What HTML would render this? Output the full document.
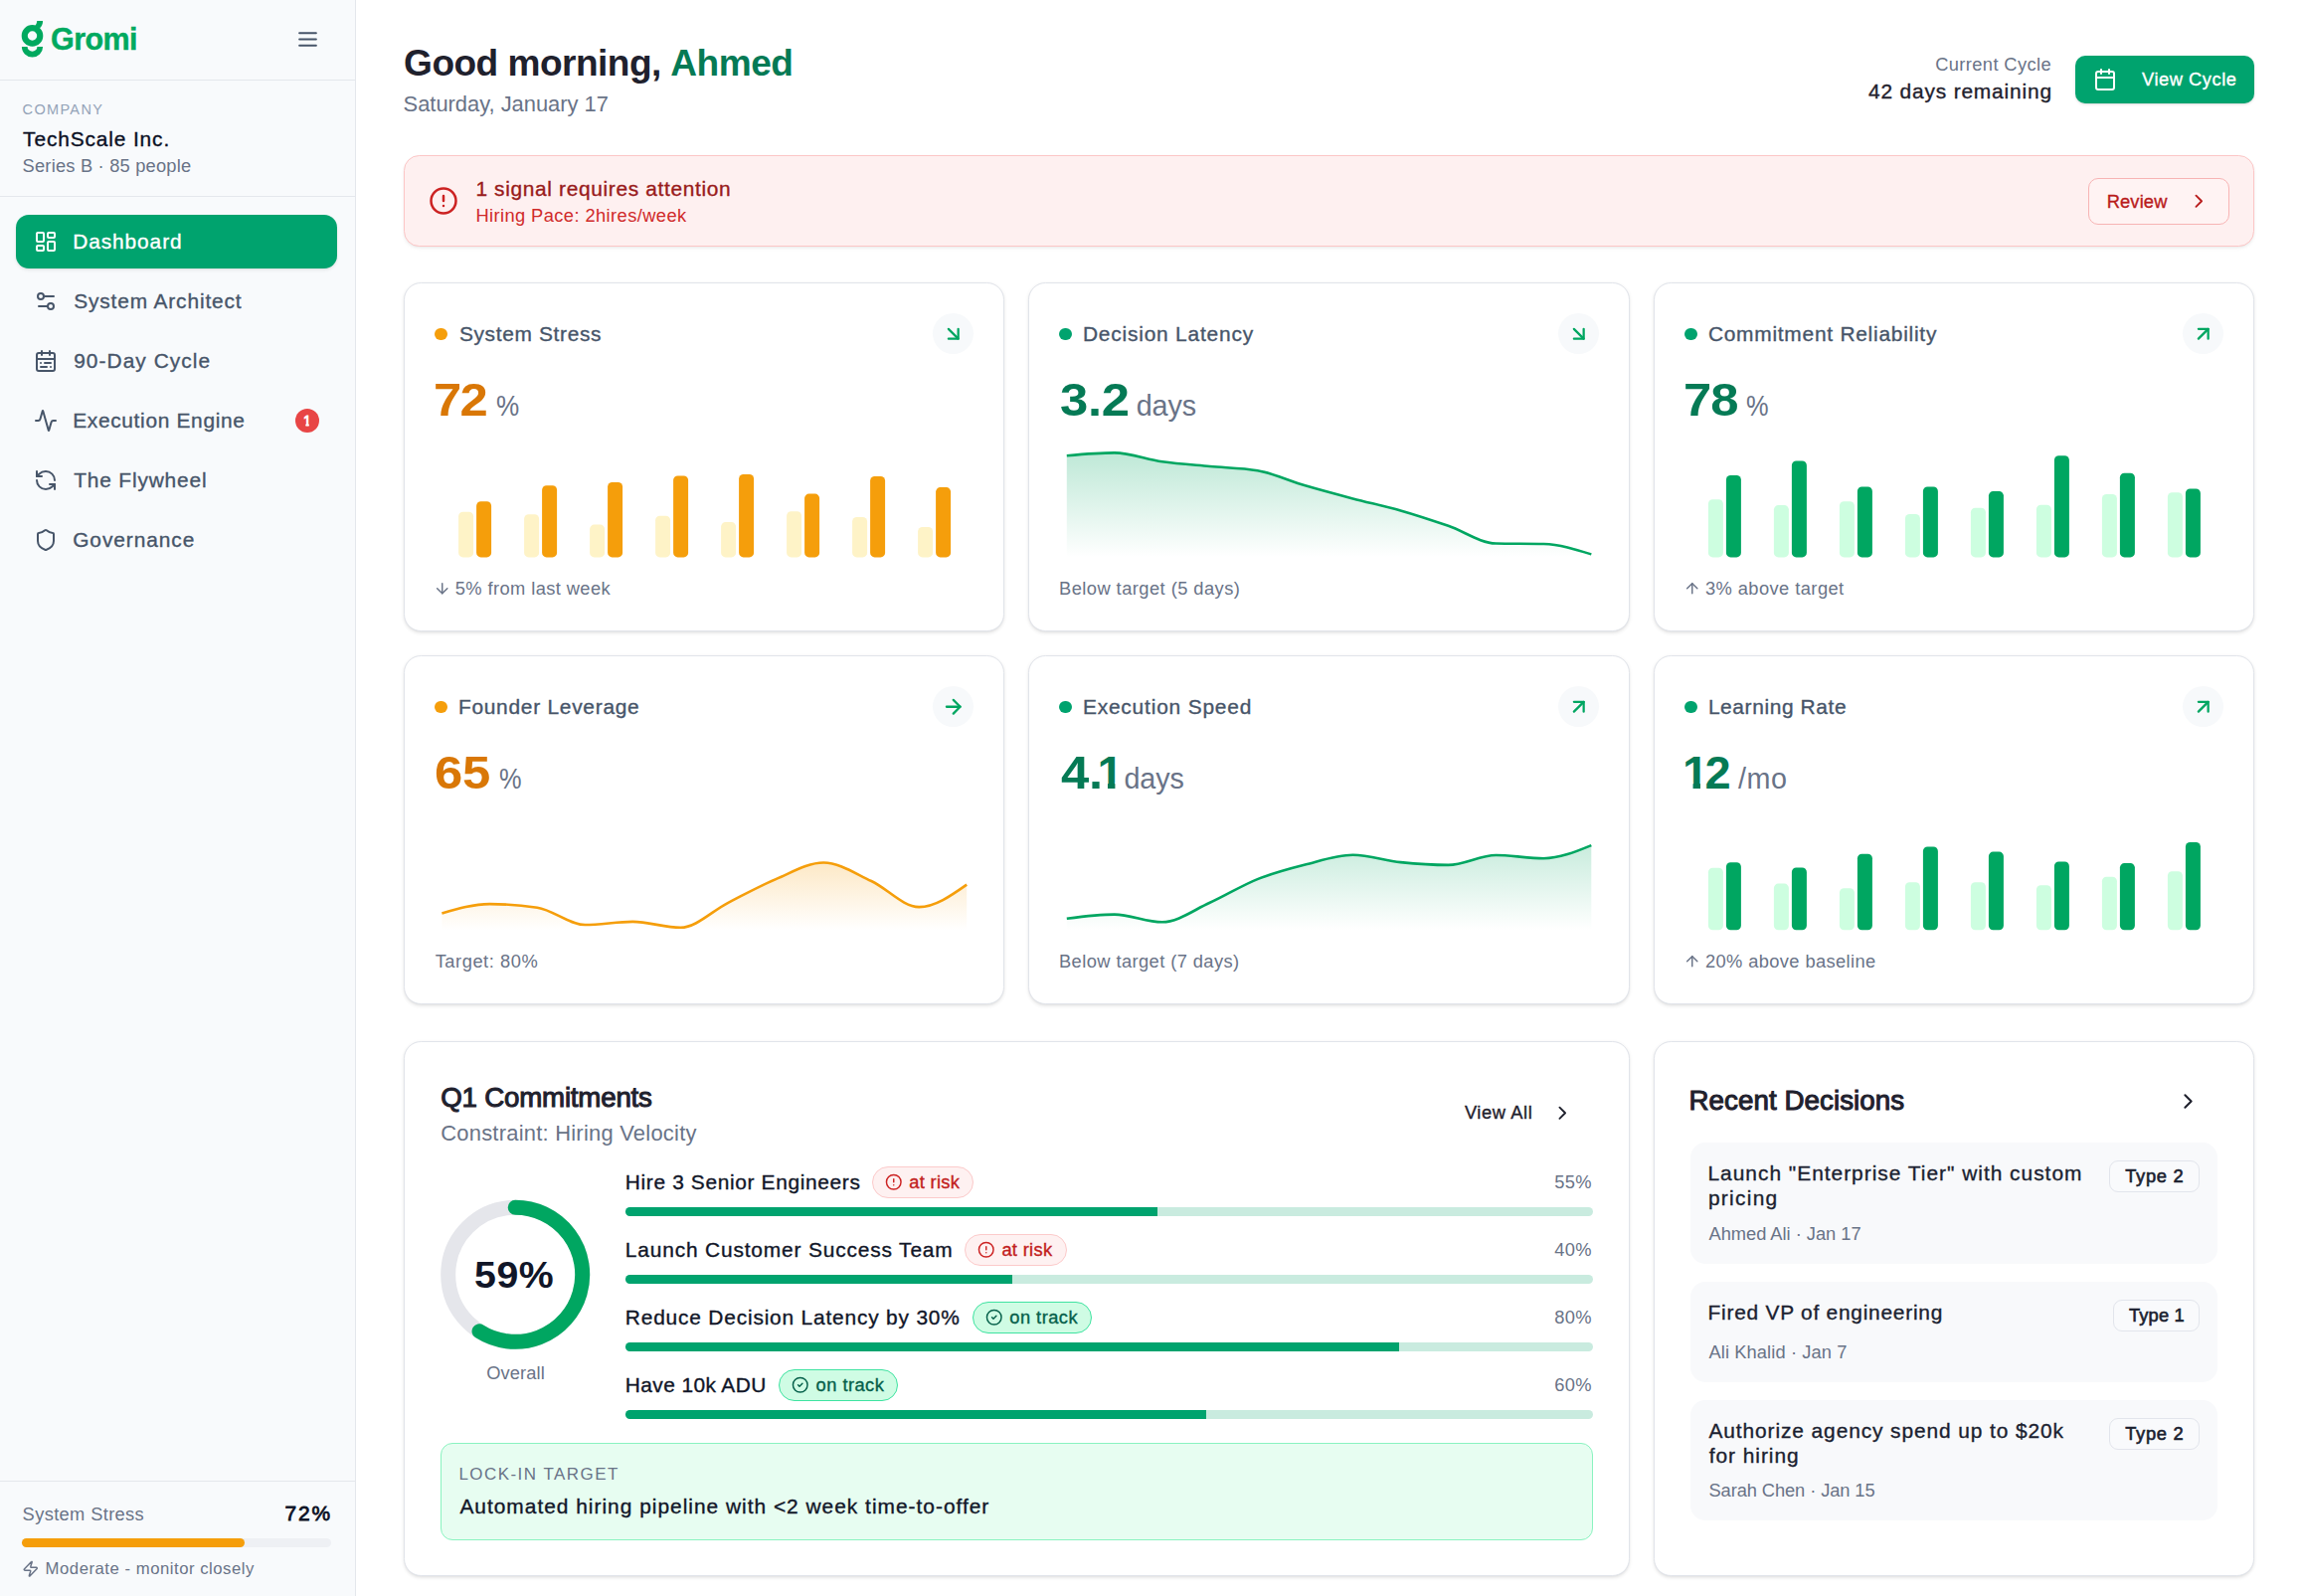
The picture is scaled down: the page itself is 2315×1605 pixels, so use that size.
<!DOCTYPE html>
<html lang="en"><head><meta charset="utf-8"><title>Gromi Dashboard</title>
<style>
html,body{margin:0;padding:0}
body{width:2315px;height:1605px;position:relative;overflow:hidden;background:#fff;font-family:"Liberation Sans",sans-serif}
</style></head><body>
<div style="position:absolute;left:0px;top:0px;width:357px;height:1605px;background:#f8fafc"></div>
<div style="position:absolute;left:357px;top:0px;width:1px;height:1605px;background:#e4e7ec"></div>
<div style="position:absolute;left:0px;top:80px;width:357px;height:1px;background:#e4e7ec"></div>
<div style="position:absolute;left:0px;top:197px;width:357px;height:1px;background:#e4e7ec"></div>
<div style="position:absolute;left:0px;top:1489px;width:357px;height:1px;background:#e4e7ec"></div>
<svg style="position:absolute;left:18px;top:16px" width="32" height="46" viewBox="18 16 32 46">
<g fill="#00a95f"><path d="M32.5 25.1a10.8 10.8 0 1 0 0 21.6a10.8 10.8 0 1 0 0-21.6zm0 6.2a4.7 4.7 0 1 1 0 9.4a4.7 4.7 0 1 1 0-9.4z" fill-rule="evenodd"/>
<path d="M37.2 20.9h5.9c0 3.2-1.2 5.6-3.2 7.4l-4.6-2.6c1.2-1.4 1.9-2.9 1.9-4.8z"/>
<path d="M21.9 46.9h5.7a4.9 4.9 0 0 0 9.8 0h5.7a10.6 10.6 0 0 1-21.2 0z"/></g></svg>
<svg style="position:absolute;left:296.50px;top:26.90px" width="25" height="25" viewBox="0 0 24 24" fill="none" stroke="#475569" stroke-width="2" stroke-linecap="round" stroke-linejoin="round"><line x1="4" x2="20" y1="12" y2="12"/><line x1="4" x2="20" y1="6" y2="6"/><line x1="4" x2="20" y1="18" y2="18"/></svg>
<div style="position:absolute;left:16px;top:216px;width:323px;height:54px;background:#00a36e;border-radius:13px;box-shadow:0 2px 4px -1px rgba(0,0,0,.10),0 1px 3px -1px rgba(0,0,0,.08)"></div>
<svg style="position:absolute;left:34.00px;top:231.00px" width="24" height="24" viewBox="0 0 24 24" fill="none" stroke="#fff" stroke-width="2" stroke-linecap="round" stroke-linejoin="round"><rect width="7" height="9" x="3" y="3" rx="1"/><rect width="7" height="5" x="14" y="3" rx="1"/><rect width="7" height="9" x="14" y="12" rx="1"/><rect width="7" height="5" x="3" y="16" rx="1"/></svg>
<svg style="position:absolute;left:34.00px;top:291.00px" width="24" height="24" viewBox="0 0 24 24" fill="none" stroke="#475569" stroke-width="2" stroke-linecap="round" stroke-linejoin="round"><path d="M20 7h-9"/><path d="M14 17H5"/><circle cx="17" cy="17" r="3"/><circle cx="7" cy="7" r="3"/></svg>
<svg style="position:absolute;left:34.00px;top:351.00px" width="24" height="24" viewBox="0 0 24 24" fill="none" stroke="#475569" stroke-width="2" stroke-linecap="round" stroke-linejoin="round"><rect width="18" height="18" x="3" y="4" rx="2"/><path d="M16 2v4"/><path d="M3 10h18"/><path d="M8 2v4"/><path d="M17 14h-6"/><path d="M13 18H7"/><path d="M7 14h.01"/><path d="M17 18h.01"/></svg>
<svg style="position:absolute;left:34.00px;top:411.00px" width="24" height="24" viewBox="0 0 24 24" fill="none" stroke="#475569" stroke-width="2" stroke-linecap="round" stroke-linejoin="round"><path d="M22 12h-2.48a2 2 0 0 0-1.93 1.46l-2.35 8.36a.25.25 0 0 1-.48 0L9.24 2.18a.25.25 0 0 0-.48 0l-2.35 8.36A2 2 0 0 1 4.49 12H2"/></svg>
<svg style="position:absolute;left:34.00px;top:471.00px" width="24" height="24" viewBox="0 0 24 24" fill="none" stroke="#475569" stroke-width="2" stroke-linecap="round" stroke-linejoin="round"><path d="M21 12a9 9 0 0 0-9-9 9.75 9.75 0 0 0-6.74 2.74L3 8"/><path d="M3 3v5h5"/><path d="M3 12a9 9 0 0 0 9 9 9.75 9.75 0 0 0 6.74-2.74L21 16"/><path d="M16 16h5v5"/></svg>
<svg style="position:absolute;left:34.00px;top:531.00px" width="24" height="24" viewBox="0 0 24 24" fill="none" stroke="#475569" stroke-width="2" stroke-linecap="round" stroke-linejoin="round"><path d="M20 13c0 5-3.5 7.5-7.66 8.95a1 1 0 0 1-.67-.01C7.5 20.5 4 18 4 13V6a1 1 0 0 1 1-1c2 0 4.5-1.2 6.24-2.72a1.17 1.17 0 0 1 1.52 0C14.51 3.81 17 5 19 5a1 1 0 0 1 1 1z"/></svg>
<div style="position:absolute;left:297px;top:411px;width:24px;height:24px;background:#e84545;border-radius:50%"></div>
<div style="position:absolute;left:22px;top:1547.2px;width:311px;height:8.8px;background:#eef0f4;border-radius:5px"></div>
<div style="position:absolute;left:22px;top:1547.2px;width:224px;height:8.8px;background:#f59e0b;border-radius:5px"></div>
<svg style="position:absolute;left:22.05px;top:1569.05px" width="17.5" height="17.5" viewBox="0 0 24 24" fill="none" stroke="#697387" stroke-width="2" stroke-linecap="round" stroke-linejoin="round"><path d="M4 14a1 1 0 0 1-.78-1.63l9.9-10.2a.5.5 0 0 1 .86.46l-1.92 6.02A1 1 0 0 0 13 10h7a1 1 0 0 1 .78 1.63l-9.9 10.2a.5.5 0 0 1-.86-.46l1.92-6.02A1 1 0 0 0 11 14z"/></svg>
<div style="position:absolute;left:2087px;top:56px;width:180px;height:47.5px;background:#00a36e;border-radius:10px;box-shadow:0 1px 3px rgba(0,0,0,.12),0 1px 2px -1px rgba(0,0,0,.12)"></div>
<svg style="position:absolute;left:2105.00px;top:68.00px" width="24" height="24" viewBox="0 0 24 24" fill="none" stroke="#fff" stroke-width="2" stroke-linecap="round" stroke-linejoin="round"><path d="M8 2v4"/><path d="M16 2v4"/><rect width="18" height="18" x="3" y="4" rx="2"/><path d="M3 10h18"/></svg>
<div style="position:absolute;left:406px;top:156px;width:1861px;height:91.5px;box-sizing:border-box;background:#fef0f0;border:1.25px solid #fcc6c6;border-radius:15.5px;box-shadow:0 2px 4px -1px rgba(0,0,0,.08),0 1px 3px -1px rgba(0,0,0,.06)"></div>
<svg style="position:absolute;left:431.10px;top:186.80px" width="30" height="30" viewBox="0 0 24 24" fill="none" stroke="#cc2222" stroke-width="2" stroke-linecap="round" stroke-linejoin="round"><circle cx="12" cy="12" r="10"/><line x1="12" x2="12" y1="8" y2="12"/><line x1="12" x2="12.01" y1="16" y2="16"/></svg>
<div style="position:absolute;left:2100px;top:178.5px;width:142px;height:47px;box-sizing:border-box;border:1.25px solid #f7b4b4;border-radius:10px;background:#fff3f3"></div>
<svg style="position:absolute;left:2199.75px;top:191.25px" width="22.5" height="22.5" viewBox="0 0 24 24" fill="none" stroke="#b91c1c" stroke-width="2" stroke-linecap="round" stroke-linejoin="round"><path d="m9 18 6-6-6-6"/></svg>
<div style="position:absolute;left:406px;top:284.4px;width:604px;height:350.6px;box-sizing:border-box;background:#fff;border:1.25px solid #e1e4ea;border-radius:17.5px;box-shadow:0 1.25px 3.75px 0 rgba(0,0,0,.085),0 1.25px 2.5px -1.25px rgba(0,0,0,.085)"></div>
<div style="position:absolute;left:437px;top:329.95px;width:12.5px;height:12.5px;background:#f59e0b;border-radius:50%"></div>
<div style="position:absolute;left:938px;top:315.2px;width:41px;height:41px;background:#f7f9fb;border-radius:50%"></div>
<svg style="position:absolute;left:946.75px;top:324.15px" width="23.5" height="23.5" viewBox="0 0 24 24" fill="none" stroke="#00a661" stroke-width="2.3" stroke-linecap="round" stroke-linejoin="round"><path d="m7 7 10 10"/><path d="M17 7v10H7"/></svg>
<svg style="position:absolute;left:435.85px;top:582.85px" width="17.5" height="17.5" viewBox="0 0 24 24" fill="none" stroke="#697387" stroke-width="2" stroke-linecap="round" stroke-linejoin="round"><path d="M12 5v14"/><path d="m19 12-7 7-7-7"/></svg>
<div style="position:absolute;left:1034px;top:284.4px;width:605px;height:350.6px;box-sizing:border-box;background:#fff;border:1.25px solid #e1e4ea;border-radius:17.5px;box-shadow:0 1.25px 3.75px 0 rgba(0,0,0,.085),0 1.25px 2.5px -1.25px rgba(0,0,0,.085)"></div>
<div style="position:absolute;left:1065px;top:329.95px;width:12.5px;height:12.5px;background:#00a36e;border-radius:50%"></div>
<div style="position:absolute;left:1567px;top:315.2px;width:41px;height:41px;background:#f7f9fb;border-radius:50%"></div>
<svg style="position:absolute;left:1575.75px;top:324.15px" width="23.5" height="23.5" viewBox="0 0 24 24" fill="none" stroke="#00a661" stroke-width="2.3" stroke-linecap="round" stroke-linejoin="round"><path d="m7 7 10 10"/><path d="M17 7v10H7"/></svg>
<div style="position:absolute;left:1663px;top:284.4px;width:604px;height:350.6px;box-sizing:border-box;background:#fff;border:1.25px solid #e1e4ea;border-radius:17.5px;box-shadow:0 1.25px 3.75px 0 rgba(0,0,0,.085),0 1.25px 2.5px -1.25px rgba(0,0,0,.085)"></div>
<div style="position:absolute;left:1694px;top:329.95px;width:12.5px;height:12.5px;background:#00a36e;border-radius:50%"></div>
<div style="position:absolute;left:2195px;top:315.2px;width:41px;height:41px;background:#f7f9fb;border-radius:50%"></div>
<svg style="position:absolute;left:2203.75px;top:324.15px" width="23.5" height="23.5" viewBox="0 0 24 24" fill="none" stroke="#00a661" stroke-width="2.3" stroke-linecap="round" stroke-linejoin="round"><path d="M7 7h10v10"/><path d="M7 17 17 7"/></svg>
<svg style="position:absolute;left:1692.85px;top:582.85px" width="17.5" height="17.5" viewBox="0 0 24 24" fill="none" stroke="#697387" stroke-width="2" stroke-linecap="round" stroke-linejoin="round"><path d="m5 12 7-7 7 7"/><path d="M12 19V5"/></svg>
<div style="position:absolute;left:406px;top:659.4px;width:604px;height:350.6px;box-sizing:border-box;background:#fff;border:1.25px solid #e1e4ea;border-radius:17.5px;box-shadow:0 1.25px 3.75px 0 rgba(0,0,0,.085),0 1.25px 2.5px -1.25px rgba(0,0,0,.085)"></div>
<div style="position:absolute;left:437px;top:704.95px;width:12.5px;height:12.5px;background:#f59e0b;border-radius:50%"></div>
<div style="position:absolute;left:938px;top:690.2px;width:41px;height:41px;background:#f7f9fb;border-radius:50%"></div>
<svg style="position:absolute;left:946.75px;top:699.15px" width="23.5" height="23.5" viewBox="0 0 24 24" fill="none" stroke="#00a661" stroke-width="2.3" stroke-linecap="round" stroke-linejoin="round"><path d="M5 12h14"/><path d="m12 5 7 7-7 7"/></svg>
<div style="position:absolute;left:1034px;top:659.4px;width:605px;height:350.6px;box-sizing:border-box;background:#fff;border:1.25px solid #e1e4ea;border-radius:17.5px;box-shadow:0 1.25px 3.75px 0 rgba(0,0,0,.085),0 1.25px 2.5px -1.25px rgba(0,0,0,.085)"></div>
<div style="position:absolute;left:1065px;top:704.95px;width:12.5px;height:12.5px;background:#00a36e;border-radius:50%"></div>
<div style="position:absolute;left:1567px;top:690.2px;width:41px;height:41px;background:#f7f9fb;border-radius:50%"></div>
<svg style="position:absolute;left:1575.75px;top:699.15px" width="23.5" height="23.5" viewBox="0 0 24 24" fill="none" stroke="#00a661" stroke-width="2.3" stroke-linecap="round" stroke-linejoin="round"><path d="M7 7h10v10"/><path d="M7 17 17 7"/></svg>
<div style="position:absolute;left:1663px;top:659.4px;width:604px;height:350.6px;box-sizing:border-box;background:#fff;border:1.25px solid #e1e4ea;border-radius:17.5px;box-shadow:0 1.25px 3.75px 0 rgba(0,0,0,.085),0 1.25px 2.5px -1.25px rgba(0,0,0,.085)"></div>
<div style="position:absolute;left:1694px;top:704.95px;width:12.5px;height:12.5px;background:#00a36e;border-radius:50%"></div>
<div style="position:absolute;left:2195px;top:690.2px;width:41px;height:41px;background:#f7f9fb;border-radius:50%"></div>
<svg style="position:absolute;left:2203.75px;top:699.15px" width="23.5" height="23.5" viewBox="0 0 24 24" fill="none" stroke="#00a661" stroke-width="2.3" stroke-linecap="round" stroke-linejoin="round"><path d="M7 7h10v10"/><path d="M7 17 17 7"/></svg>
<svg style="position:absolute;left:1692.85px;top:957.85px" width="17.5" height="17.5" viewBox="0 0 24 24" fill="none" stroke="#697387" stroke-width="2" stroke-linecap="round" stroke-linejoin="round"><path d="m5 12 7-7 7 7"/><path d="M12 19V5"/></svg>
<svg style="position:absolute;left:0;top:0;pointer-events:none" width="2315" height="1605"><rect x="461.10" y="514.8" width="15" height="45.6" rx="4.5" fill="#fef3c7"/><rect x="479.10" y="504.2" width="15" height="56.2" rx="4.5" fill="#f59e0b"/><rect x="527.10" y="517.3" width="15" height="43.1" rx="4.5" fill="#fef3c7"/><rect x="545.10" y="488.3" width="15" height="72.1" rx="4.5" fill="#f59e0b"/><rect x="593.10" y="527.6" width="15" height="32.8" rx="4.5" fill="#fef3c7"/><rect x="611.10" y="485.0" width="15" height="75.4" rx="4.5" fill="#f59e0b"/><rect x="659.10" y="518.8" width="15" height="41.6" rx="4.5" fill="#fef3c7"/><rect x="677.10" y="478.5" width="15" height="81.9" rx="4.5" fill="#f59e0b"/><rect x="725.10" y="525.1" width="15" height="35.3" rx="4.5" fill="#fef3c7"/><rect x="743.10" y="477.0" width="15" height="83.4" rx="4.5" fill="#f59e0b"/><rect x="791.10" y="514.2" width="15" height="46.2" rx="4.5" fill="#fef3c7"/><rect x="809.10" y="496.6" width="15" height="63.8" rx="4.5" fill="#f59e0b"/><rect x="857.10" y="520.0" width="15" height="40.4" rx="4.5" fill="#fef3c7"/><rect x="875.10" y="479.0" width="15" height="81.4" rx="4.5" fill="#f59e0b"/><rect x="923.10" y="529.9" width="15" height="30.5" rx="4.5" fill="#fef3c7"/><rect x="941.10" y="490.1" width="15" height="70.3" rx="4.5" fill="#f59e0b"/></svg>
<svg style="position:absolute;left:0;top:0;pointer-events:none" width="2315" height="1605"><rect x="1717.90" y="502.3" width="15" height="58.1" rx="4.5" fill="#cdfee0"/><rect x="1735.90" y="478.0" width="15" height="82.4" rx="4.5" fill="#00a661"/><rect x="1783.90" y="508.1" width="15" height="52.3" rx="4.5" fill="#cdfee0"/><rect x="1801.90" y="463.5" width="15" height="96.9" rx="4.5" fill="#00a661"/><rect x="1849.90" y="504.3" width="15" height="56.1" rx="4.5" fill="#cdfee0"/><rect x="1867.90" y="489.5" width="15" height="70.9" rx="4.5" fill="#00a661"/><rect x="1915.90" y="516.9" width="15" height="43.5" rx="4.5" fill="#cdfee0"/><rect x="1933.90" y="489.5" width="15" height="70.9" rx="4.5" fill="#00a661"/><rect x="1981.90" y="510.8" width="15" height="49.6" rx="4.5" fill="#cdfee0"/><rect x="1999.90" y="494.1" width="15" height="66.3" rx="4.5" fill="#00a661"/><rect x="2047.90" y="507.8" width="15" height="52.6" rx="4.5" fill="#cdfee0"/><rect x="2065.90" y="458.3" width="15" height="102.1" rx="4.5" fill="#00a661"/><rect x="2113.90" y="496.9" width="15" height="63.5" rx="4.5" fill="#cdfee0"/><rect x="2131.90" y="475.8" width="15" height="84.6" rx="4.5" fill="#00a661"/><rect x="2179.90" y="495.2" width="15" height="65.2" rx="4.5" fill="#cdfee0"/><rect x="2197.90" y="491.4" width="15" height="69.0" rx="4.5" fill="#00a661"/></svg>
<svg style="position:absolute;left:0;top:0;pointer-events:none" width="2315" height="1605"><rect x="1717.90" y="872.8" width="15" height="62.5" rx="4.5" fill="#cdfee0"/><rect x="1735.90" y="867.3" width="15" height="68.0" rx="4.5" fill="#00a661"/><rect x="1783.90" y="888.6" width="15" height="46.7" rx="4.5" fill="#cdfee0"/><rect x="1801.90" y="872.5" width="15" height="62.8" rx="4.5" fill="#00a661"/><rect x="1849.90" y="893.3" width="15" height="42.0" rx="4.5" fill="#cdfee0"/><rect x="1867.90" y="858.8" width="15" height="76.5" rx="4.5" fill="#00a661"/><rect x="1915.90" y="887.3" width="15" height="48.0" rx="4.5" fill="#cdfee0"/><rect x="1933.90" y="851.4" width="15" height="83.9" rx="4.5" fill="#00a661"/><rect x="1981.90" y="887.3" width="15" height="48.0" rx="4.5" fill="#cdfee0"/><rect x="1999.90" y="856.6" width="15" height="78.7" rx="4.5" fill="#00a661"/><rect x="2047.90" y="890.3" width="15" height="45.0" rx="4.5" fill="#cdfee0"/><rect x="2065.90" y="866.5" width="15" height="68.8" rx="4.5" fill="#00a661"/><rect x="2113.90" y="881.8" width="15" height="53.5" rx="4.5" fill="#cdfee0"/><rect x="2131.90" y="868.1" width="15" height="67.2" rx="4.5" fill="#00a661"/><rect x="2179.90" y="876.3" width="15" height="59.0" rx="4.5" fill="#cdfee0"/><rect x="2197.90" y="847.0" width="15" height="88.3" rx="4.5" fill="#00a661"/></svg>
<svg style="position:absolute;left:0;top:0;pointer-events:none" width="2315" height="1605"><defs><linearGradient id="g2" x1="0" y1="453.4" x2="0" y2="560.4" gradientUnits="userSpaceOnUse"><stop offset="0" stop-color="#00a661" stop-opacity="0.26"/><stop offset="1" stop-color="#00a661" stop-opacity="0"/></linearGradient></defs><path d="M1072.80,458.20C1088.78,456.80,1104.77,455.40,1120.75,455.40C1136.74,455.40,1152.72,462.03,1168.71,464.30C1184.69,466.57,1200.68,467.52,1216.66,469.00C1232.65,470.48,1248.63,470.40,1264.62,473.20C1280.60,476.00,1296.59,483.60,1312.57,488.30C1328.56,493.00,1344.54,497.22,1360.53,501.40C1376.51,505.58,1392.50,508.83,1408.48,513.40C1424.47,517.97,1440.45,523.28,1456.44,528.80C1472.42,534.32,1488.41,546.17,1504.39,546.50C1520.38,546.83,1536.36,546.67,1552.35,547.00C1568.33,547.33,1584.32,552.37,1600.30,557.40L1600.30,560.40L1072.80,560.40Z" fill="url(#g2)"/><path d="M1072.80,458.20C1088.78,456.80,1104.77,455.40,1120.75,455.40C1136.74,455.40,1152.72,462.03,1168.71,464.30C1184.69,466.57,1200.68,467.52,1216.66,469.00C1232.65,470.48,1248.63,470.40,1264.62,473.20C1280.60,476.00,1296.59,483.60,1312.57,488.30C1328.56,493.00,1344.54,497.22,1360.53,501.40C1376.51,505.58,1392.50,508.83,1408.48,513.40C1424.47,517.97,1440.45,523.28,1456.44,528.80C1472.42,534.32,1488.41,546.17,1504.39,546.50C1520.38,546.83,1536.36,546.67,1552.35,547.00C1568.33,547.33,1584.32,552.37,1600.30,557.40" fill="none" stroke="#00a661" stroke-width="2.6" stroke-linecap="butt" stroke-linejoin="round"/></svg>
<svg style="position:absolute;left:0;top:0;pointer-events:none" width="2315" height="1605"><defs><linearGradient id="g4" x1="0" y1="865.5" x2="0" y2="935.3" gradientUnits="userSpaceOnUse"><stop offset="0" stop-color="#f59e0b" stop-opacity="0.24"/><stop offset="1" stop-color="#f59e0b" stop-opacity="0"/></linearGradient></defs><path d="M444.40,918.60C460.39,913.85,476.39,909.10,492.38,909.10C508.38,909.10,524.37,910.30,540.36,912.70C556.36,915.10,572.35,930.00,588.35,930.00C604.34,930.00,620.33,926.90,636.33,926.90C652.32,926.90,668.32,932.80,684.31,932.80C700.30,932.80,716.30,915.92,732.29,907.80C748.28,899.68,764.28,890.82,780.27,884.10C796.27,877.38,812.26,867.50,828.25,867.50C844.25,867.50,860.24,878.57,876.24,886.00C892.23,893.43,908.22,912.10,924.22,912.10C940.21,912.10,956.21,900.85,972.20,889.60L972.20,935.30L444.40,935.30Z" fill="url(#g4)"/><path d="M444.40,918.60C460.39,913.85,476.39,909.10,492.38,909.10C508.38,909.10,524.37,910.30,540.36,912.70C556.36,915.10,572.35,930.00,588.35,930.00C604.34,930.00,620.33,926.90,636.33,926.90C652.32,926.90,668.32,932.80,684.31,932.80C700.30,932.80,716.30,915.92,732.29,907.80C748.28,899.68,764.28,890.82,780.27,884.10C796.27,877.38,812.26,867.50,828.25,867.50C844.25,867.50,860.24,878.57,876.24,886.00C892.23,893.43,908.22,912.10,924.22,912.10C940.21,912.10,956.21,900.85,972.20,889.60" fill="none" stroke="#f59e0b" stroke-width="2.6" stroke-linecap="butt" stroke-linejoin="round"/></svg>
<svg style="position:absolute;left:0;top:0;pointer-events:none" width="2315" height="1605"><defs><linearGradient id="g5" x1="0" y1="848.1" x2="0" y2="935.3" gradientUnits="userSpaceOnUse"><stop offset="0" stop-color="#00a661" stop-opacity="0.22"/><stop offset="1" stop-color="#00a661" stop-opacity="0"/></linearGradient></defs><path d="M1072.80,923.70C1088.78,921.65,1104.77,919.60,1120.75,919.60C1136.74,919.60,1152.72,927.30,1168.71,927.30C1184.69,927.30,1200.68,915.00,1216.66,907.80C1232.65,900.60,1248.63,890.48,1264.62,884.10C1280.60,877.72,1296.59,873.55,1312.57,869.50C1328.56,865.45,1344.54,859.80,1360.53,859.80C1376.51,859.80,1392.50,865.42,1408.48,867.10C1424.47,868.78,1440.45,869.90,1456.44,869.90C1472.42,869.90,1488.41,860.00,1504.39,860.00C1520.38,860.00,1536.36,863.20,1552.35,863.20C1568.33,863.20,1584.32,856.65,1600.30,850.10L1600.30,935.30L1072.80,935.30Z" fill="url(#g5)"/><path d="M1072.80,923.70C1088.78,921.65,1104.77,919.60,1120.75,919.60C1136.74,919.60,1152.72,927.30,1168.71,927.30C1184.69,927.30,1200.68,915.00,1216.66,907.80C1232.65,900.60,1248.63,890.48,1264.62,884.10C1280.60,877.72,1296.59,873.55,1312.57,869.50C1328.56,865.45,1344.54,859.80,1360.53,859.80C1376.51,859.80,1392.50,865.42,1408.48,867.10C1424.47,868.78,1440.45,869.90,1456.44,869.90C1472.42,869.90,1488.41,860.00,1504.39,860.00C1520.38,860.00,1536.36,863.20,1552.35,863.20C1568.33,863.20,1584.32,856.65,1600.30,850.10" fill="none" stroke="#00a661" stroke-width="2.6" stroke-linecap="butt" stroke-linejoin="round"/></svg>
<div style="position:absolute;left:406px;top:1046.5px;width:1233px;height:538.5px;box-sizing:border-box;background:#fff;border:1.25px solid #e1e4ea;border-radius:17.5px;box-shadow:0 1.25px 3.75px 0 rgba(0,0,0,.085),0 1.25px 2.5px -1.25px rgba(0,0,0,.085)"></div>
<svg style="position:absolute;left:1560.25px;top:1107.75px" width="22.5" height="22.5" viewBox="0 0 24 24" fill="none" stroke="#1f212d" stroke-width="2" stroke-linecap="round" stroke-linejoin="round"><path d="m9 18 6-6-6-6"/></svg>
<svg style="position:absolute;left:0;top:0;pointer-events:none" width="2315" height="1605"><circle cx="518.2" cy="1281.8" r="67.5" fill="none" stroke="#e5e6eb" stroke-width="15"/><path d="M518.2,1214.3A67.5,67.5 0 1 1 482.03,1338.79" fill="none" stroke="#00a661" stroke-width="15" stroke-linecap="round"/></svg>
<div style="position:absolute;left:877px;top:1173.3px;width:101.79999999999995px;height:31.4px;box-sizing:border-box;background:#fef1f1;border:1.25px solid #fccaca;border-radius:16px"></div>
<svg style="position:absolute;left:889.95px;top:1180.25px" width="17.5" height="17.5" viewBox="0 0 24 24" fill="none" stroke="#cc2222" stroke-width="2" stroke-linecap="round" stroke-linejoin="round"><circle cx="12" cy="12" r="10"/><line x1="12" x2="12" y1="8" y2="12"/><line x1="12" x2="12.01" y1="16" y2="16"/></svg>
<div style="position:absolute;left:628.7px;top:1213.8px;width:973.5px;height:9.6px;background:#c9ebdf;border-radius:5px;overflow:hidden"></div>
<div style="position:absolute;left:628.7px;top:1213.8px;width:535.425px;height:9.6px;background:#00a36e;border-radius:5px 0 0 5px"></div>
<div style="position:absolute;left:970.1px;top:1241.3px;width:102.80000000000007px;height:31.4px;box-sizing:border-box;background:#fef1f1;border:1.25px solid #fccaca;border-radius:16px"></div>
<svg style="position:absolute;left:983.05px;top:1248.25px" width="17.5" height="17.5" viewBox="0 0 24 24" fill="none" stroke="#cc2222" stroke-width="2" stroke-linecap="round" stroke-linejoin="round"><circle cx="12" cy="12" r="10"/><line x1="12" x2="12" y1="8" y2="12"/><line x1="12" x2="12.01" y1="16" y2="16"/></svg>
<div style="position:absolute;left:628.7px;top:1281.8px;width:973.5px;height:9.6px;background:#c9ebdf;border-radius:5px;overflow:hidden"></div>
<div style="position:absolute;left:628.7px;top:1281.8px;width:389.4px;height:9.6px;background:#00a36e;border-radius:5px 0 0 5px"></div>
<div style="position:absolute;left:978px;top:1309.3px;width:119.79999999999995px;height:31.4px;box-sizing:border-box;background:#cffce4;border:1.25px solid #3fe3a1;border-radius:16px"></div>
<svg style="position:absolute;left:990.95px;top:1316.25px" width="17.5" height="17.5" viewBox="0 0 24 24" fill="none" stroke="#06604a" stroke-width="2" stroke-linecap="round" stroke-linejoin="round"><circle cx="12" cy="12" r="10"/><path d="m9 12 2 2 4-4"/></svg>
<div style="position:absolute;left:628.7px;top:1349.8px;width:973.5px;height:9.6px;background:#c9ebdf;border-radius:5px;overflow:hidden"></div>
<div style="position:absolute;left:628.7px;top:1349.8px;width:778.8px;height:9.6px;background:#00a36e;border-radius:5px 0 0 5px"></div>
<div style="position:absolute;left:783.3px;top:1377.3px;width:119.5px;height:31.4px;box-sizing:border-box;background:#cffce4;border:1.25px solid #3fe3a1;border-radius:16px"></div>
<svg style="position:absolute;left:796.25px;top:1384.25px" width="17.5" height="17.5" viewBox="0 0 24 24" fill="none" stroke="#06604a" stroke-width="2" stroke-linecap="round" stroke-linejoin="round"><circle cx="12" cy="12" r="10"/><path d="m9 12 2 2 4-4"/></svg>
<div style="position:absolute;left:628.7px;top:1417.8px;width:973.5px;height:9.6px;background:#c9ebdf;border-radius:5px;overflow:hidden"></div>
<div style="position:absolute;left:628.7px;top:1417.8px;width:584.1px;height:9.6px;background:#00a36e;border-radius:5px 0 0 5px"></div>
<div style="position:absolute;left:443px;top:1450.8px;width:1159.2px;height:98px;box-sizing:border-box;background:#e7fdf1;border:1.25px solid #8af3c0;border-radius:12px"></div>
<div style="position:absolute;left:1663px;top:1046.5px;width:604px;height:538.5px;box-sizing:border-box;background:#fff;border:1.25px solid #e1e4ea;border-radius:17.5px;box-shadow:0 1.25px 3.75px 0 rgba(0,0,0,.085),0 1.25px 2.5px -1.25px rgba(0,0,0,.085)"></div>
<svg style="position:absolute;left:2187.50px;top:1094.60px" width="25" height="25" viewBox="0 0 24 24" fill="none" stroke="#1f212d" stroke-width="2" stroke-linecap="round" stroke-linejoin="round"><path d="m9 18 6-6-6-6"/></svg>
<div style="position:absolute;left:1700px;top:1148.9px;width:530.2px;height:122.3px;background:#f8f9fb;border-radius:15px"></div>
<div style="position:absolute;left:1700px;top:1288.8px;width:530.2px;height:101px;background:#f8f9fb;border-radius:15px"></div>
<div style="position:absolute;left:1700px;top:1408.1px;width:530.2px;height:120.8px;background:#f8f9fb;border-radius:15px"></div>
<div style="position:absolute;left:2121.2px;top:1167px;width:90.8px;height:31.8px;box-sizing:border-box;border:1.25px solid #e2e5ec;border-radius:9px;background:#f9fafc"></div>
<div style="position:absolute;left:2125.2px;top:1306.9px;width:86.8px;height:31.8px;box-sizing:border-box;border:1.25px solid #e2e5ec;border-radius:9px;background:#f9fafc"></div>
<div style="position:absolute;left:2121.2px;top:1426.2px;width:90.8px;height:31.8px;box-sizing:border-box;border:1.25px solid #e2e5ec;border-radius:9px;background:#f9fafc"></div>
<span style="position:absolute;left:51.00px;top:19px;font-size:30.5px;line-height:40px;font-weight:700;color:#00a95f;letter-spacing:-0.561px;white-space:pre;-webkit-text-stroke:0.4px #00a95f;">Gromi</span>
<span style="position:absolute;left:22.60px;top:101px;font-size:14.53px;line-height:19px;font-weight:400;color:#94a3b8;letter-spacing:1.328px;white-space:pre;">COMPANY</span>
<span style="position:absolute;left:23.10px;top:126px;font-size:20.9px;line-height:27px;font-weight:400;color:#0b1024;letter-spacing:0.865px;white-space:pre;-webkit-text-stroke:0.35px currentColor;">TechScale Inc.</span>
<span style="position:absolute;left:22.60px;top:155px;font-size:18.29px;line-height:24px;font-weight:400;color:#697387;letter-spacing:0.206px;white-space:pre;">Series B · 85 people</span>
<span style="position:absolute;left:73.20px;top:229px;font-size:20.9px;line-height:27px;font-weight:400;color:#fff;letter-spacing:0.902px;white-space:pre;-webkit-text-stroke:0.35px currentColor;">Dashboard</span>
<span style="position:absolute;left:74.20px;top:289px;font-size:20.9px;line-height:27px;font-weight:400;color:#475569;letter-spacing:0.859px;white-space:pre;-webkit-text-stroke:0.35px currentColor;">System Architect</span>
<span style="position:absolute;left:74.20px;top:349px;font-size:20.9px;line-height:27px;font-weight:400;color:#475569;letter-spacing:1.049px;white-space:pre;-webkit-text-stroke:0.35px currentColor;">90-Day Cycle</span>
<span style="position:absolute;left:73.20px;top:409px;font-size:20.9px;line-height:27px;font-weight:400;color:#475569;letter-spacing:0.675px;white-space:pre;-webkit-text-stroke:0.35px currentColor;">Execution Engine</span>
<span style="position:absolute;left:74.20px;top:469px;font-size:20.9px;line-height:27px;font-weight:400;color:#475569;letter-spacing:0.837px;white-space:pre;-webkit-text-stroke:0.35px currentColor;">The Flywheel</span>
<span style="position:absolute;left:73.20px;top:529px;font-size:20.9px;line-height:27px;font-weight:400;color:#475569;letter-spacing:0.923px;white-space:pre;-webkit-text-stroke:0.35px currentColor;">Governance</span>
<span style="position:absolute;left:304.95px;top:414px;font-size:14px;line-height:18px;font-weight:400;color:#fff;letter-spacing:0.000px;white-space:pre;clip-path:polygon(-2px -2px,120% -2px,120% 11.55px,5.76px 11.55px,5.76px 120%,2.52px 120%,2.52px 11.55px,-2px 11.55px);-webkit-text-stroke:0.9px #fff;">1</span>
<span style="position:absolute;left:22.60px;top:1511px;font-size:18.29px;line-height:24px;font-weight:400;color:#697387;letter-spacing:0.359px;white-space:pre;">System Stress</span>
<span style="position:absolute;left:286.60px;top:1508px;font-size:20.9px;line-height:27px;font-weight:400;color:#0b1024;letter-spacing:1.832px;white-space:pre;-webkit-text-stroke:0.79px currentColor;">72%</span>
<span style="position:absolute;left:45.60px;top:1567px;font-size:16.72px;line-height:22px;font-weight:400;color:#697387;letter-spacing:0.518px;white-space:pre;">Moderate - monitor closely</span>
<span style="position:absolute;left:406.10px;top:39px;font-size:37.1px;line-height:48px;font-weight:700;color:#1f212d;letter-spacing:-0.540px;white-space:pre;">Good morning,</span>
<span style="position:absolute;left:674.30px;top:39px;font-size:37.1px;line-height:48px;font-weight:700;color:#057a55;letter-spacing:-0.504px;white-space:pre;">Ahmed</span>
<span style="position:absolute;left:405.60px;top:90px;font-size:21.95px;line-height:29px;font-weight:400;color:#697387;letter-spacing:-0.032px;white-space:pre;">Saturday, January 17</span>
<span style="position:absolute;left:1946.20px;top:53px;font-size:18.29px;line-height:24px;font-weight:400;color:#697387;letter-spacing:0.385px;white-space:pre;">Current Cycle</span>
<span style="position:absolute;left:1879.00px;top:78px;font-size:20.9px;line-height:27px;font-weight:400;color:#1f212d;letter-spacing:0.832px;white-space:pre;-webkit-text-stroke:0.35px currentColor;">42 days remaining</span>
<span style="position:absolute;left:2154.10px;top:68px;font-size:18.29px;line-height:24px;font-weight:400;color:#fff;letter-spacing:0.531px;white-space:pre;-webkit-text-stroke:0.35px currentColor;">View Cycle</span>
<span style="position:absolute;left:478.40px;top:176px;font-size:20.9px;line-height:27px;font-weight:400;color:#991b1b;letter-spacing:0.653px;white-space:pre;-webkit-text-stroke:0.35px currentColor;">1 signal requires attention</span>
<span style="position:absolute;left:478.40px;top:205px;font-size:18.29px;line-height:24px;font-weight:400;color:#d02a2a;letter-spacing:0.415px;white-space:pre;">Hiring Pace: 2hires/week</span>
<span style="position:absolute;left:2118.70px;top:191px;font-size:18.29px;line-height:24px;font-weight:400;color:#b91c1c;letter-spacing:0.152px;white-space:pre;-webkit-text-stroke:0.35px currentColor;">Review</span>
<span style="position:absolute;left:461.90px;top:322px;font-size:20.9px;line-height:27px;font-weight:400;color:#475569;letter-spacing:0.666px;white-space:pre;-webkit-text-stroke:0.35px currentColor;">System Stress</span>
<span style="position:absolute;left:435.64px;top:371px;font-size:47.02px;line-height:61px;font-weight:700;color:#d97706;letter-spacing:-1.555px;white-space:pre;transform:scaleX(1.0800);transform-origin:0 0;">72</span>
<span style="position:absolute;left:498.89px;top:390px;font-size:28.74px;line-height:37px;font-weight:400;color:#697387;letter-spacing:0.000px;white-space:pre;transform:scaleX(0.9083);transform-origin:0 0;">%</span>
<span style="position:absolute;left:457.80px;top:580px;font-size:18.29px;line-height:24px;font-weight:400;color:#697387;letter-spacing:0.406px;white-space:pre;">5% from last week</span>
<span style="position:absolute;left:1088.90px;top:322px;font-size:20.9px;line-height:27px;font-weight:400;color:#475569;letter-spacing:0.811px;white-space:pre;-webkit-text-stroke:0.35px currentColor;">Decision Latency</span>
<span style="position:absolute;left:1066.22px;top:371px;font-size:47.02px;line-height:61px;font-weight:700;color:#057a55;letter-spacing:-0.263px;white-space:pre;transform:scaleX(1.0800);transform-origin:0 0;">3.2</span>
<span style="position:absolute;left:1142.70px;top:390px;font-size:28.74px;line-height:37px;font-weight:400;color:#697387;letter-spacing:-0.076px;white-space:pre;">days</span>
<span style="position:absolute;left:1065.00px;top:580px;font-size:18.29px;line-height:24px;font-weight:400;color:#697387;letter-spacing:0.458px;white-space:pre;">Below target (5 days)</span>
<span style="position:absolute;left:1717.90px;top:322px;font-size:20.9px;line-height:27px;font-weight:400;color:#475569;letter-spacing:0.755px;white-space:pre;-webkit-text-stroke:0.35px currentColor;">Commitment Reliability</span>
<span style="position:absolute;left:1692.74px;top:371px;font-size:47.02px;line-height:61px;font-weight:700;color:#057a55;letter-spacing:-0.907px;white-space:pre;transform:scaleX(1.0800);transform-origin:0 0;">78</span>
<span style="position:absolute;left:1756.32px;top:390px;font-size:28.74px;line-height:37px;font-weight:400;color:#697387;letter-spacing:0.000px;white-space:pre;transform:scaleX(0.8833);transform-origin:0 0;">%</span>
<span style="position:absolute;left:1714.90px;top:580px;font-size:18.29px;line-height:24px;font-weight:400;color:#697387;letter-spacing:0.439px;white-space:pre;">3% above target</span>
<span style="position:absolute;left:460.90px;top:697px;font-size:20.9px;line-height:27px;font-weight:400;color:#475569;letter-spacing:0.740px;white-space:pre;-webkit-text-stroke:0.35px currentColor;">Founder Leverage</span>
<span style="position:absolute;left:437.12px;top:746px;font-size:47.02px;line-height:61px;font-weight:700;color:#d97706;letter-spacing:-0.333px;white-space:pre;transform:scaleX(1.0800);transform-origin:0 0;">65</span>
<span style="position:absolute;left:502.02px;top:765px;font-size:28.74px;line-height:37px;font-weight:400;color:#697387;letter-spacing:0.000px;white-space:pre;transform:scaleX(0.8833);transform-origin:0 0;">%</span>
<span style="position:absolute;left:437.70px;top:955px;font-size:18.29px;line-height:24px;font-weight:400;color:#697387;letter-spacing:0.540px;white-space:pre;">Target: 80%</span>
<span style="position:absolute;left:1088.90px;top:697px;font-size:20.9px;line-height:27px;font-weight:400;color:#475569;letter-spacing:0.819px;white-space:pre;-webkit-text-stroke:0.35px currentColor;">Execution Speed</span>
<span style="position:absolute;left:1066.80px;top:746px;font-size:47.02px;line-height:61px;font-weight:700;color:#057a55;letter-spacing:-0.315px;white-space:pre;transform:scaleX(1.0800);transform-origin:0 0;">4.</span>
<span style="position:absolute;left:1103.49px;top:746px;font-size:47.02px;line-height:61px;font-weight:700;color:#057a55;letter-spacing:0.000px;white-space:pre;clip-path:polygon(-2px -2px,120% -2px,120% 41.20px,17.93px 41.20px,17.93px 120%,10.47px 120%,10.47px 41.20px,-2px 41.20px);">1</span>
<span style="position:absolute;left:1130.50px;top:765px;font-size:28.74px;line-height:37px;font-weight:400;color:#697387;letter-spacing:-0.110px;white-space:pre;">days</span>
<span style="position:absolute;left:1065.00px;top:955px;font-size:18.29px;line-height:24px;font-weight:400;color:#697387;letter-spacing:0.418px;white-space:pre;">Below target (7 days)</span>
<span style="position:absolute;left:1717.90px;top:697px;font-size:20.9px;line-height:27px;font-weight:400;color:#475569;letter-spacing:0.615px;white-space:pre;-webkit-text-stroke:0.35px currentColor;">Learning Rate</span>
<span style="position:absolute;left:1692.09px;top:746px;font-size:47.02px;line-height:61px;font-weight:700;color:#057a55;letter-spacing:0.000px;white-space:pre;clip-path:polygon(-2px -2px,120% -2px,120% 41.20px,17.93px 41.20px,17.93px 120%,10.47px 120%,10.47px 41.20px,-2px 41.20px);">1</span>
<span style="position:absolute;left:1714.40px;top:746px;font-size:47.02px;line-height:61px;font-weight:700;color:#057a55;letter-spacing:0.000px;white-space:pre;">2</span>
<span style="position:absolute;left:1747.90px;top:765px;font-size:28.74px;line-height:37px;font-weight:400;color:#697387;letter-spacing:0.640px;white-space:pre;">/mo</span>
<span style="position:absolute;left:1714.90px;top:955px;font-size:18.29px;line-height:24px;font-weight:400;color:#697387;letter-spacing:0.395px;white-space:pre;">20% above baseline</span>
<span style="position:absolute;left:443.20px;top:1086px;font-size:27.69px;line-height:36px;font-weight:400;color:#1f212d;letter-spacing:-0.204px;white-space:pre;-webkit-text-stroke:1.05px currentColor;">Q1 Commitments</span>
<span style="position:absolute;left:443.20px;top:1125px;font-size:21.95px;line-height:29px;font-weight:400;color:#697387;letter-spacing:0.235px;white-space:pre;">Constraint: Hiring Velocity</span>
<span style="position:absolute;left:1472.90px;top:1107px;font-size:18.29px;line-height:24px;font-weight:400;color:#1f212d;letter-spacing:0.610px;white-space:pre;-webkit-text-stroke:0.35px currentColor;">View All</span>
<span style="position:absolute;left:476.94px;top:1258px;font-size:37.1px;line-height:48px;font-weight:700;color:#111628;letter-spacing:0.530px;white-space:pre;transform:scaleX(1.0600);transform-origin:0 0;">59%</span>
<span style="position:absolute;left:489.20px;top:1369px;font-size:18.29px;line-height:24px;font-weight:400;color:#697387;letter-spacing:0.126px;white-space:pre;">Overall</span>
<span style="position:absolute;left:628.80px;top:1175px;font-size:20.9px;line-height:27px;font-weight:400;color:#111628;letter-spacing:0.648px;white-space:pre;-webkit-text-stroke:0.35px currentColor;">Hire 3 Senior Engineers</span>
<span style="position:absolute;left:914.30px;top:1177px;font-size:18.29px;line-height:24px;font-weight:400;color:#c22020;letter-spacing:0.314px;white-space:pre;-webkit-text-stroke:0.35px currentColor;">at risk</span>
<span style="position:absolute;left:1563.20px;top:1177px;font-size:18.29px;line-height:24px;font-weight:400;color:#697387;letter-spacing:0.333px;white-space:pre;">55%</span>
<span style="position:absolute;left:628.80px;top:1243px;font-size:20.9px;line-height:27px;font-weight:400;color:#111628;letter-spacing:0.843px;white-space:pre;-webkit-text-stroke:0.35px currentColor;">Launch Customer Success Team</span>
<span style="position:absolute;left:1007.40px;top:1245px;font-size:18.29px;line-height:24px;font-weight:400;color:#c22020;letter-spacing:0.314px;white-space:pre;-webkit-text-stroke:0.35px currentColor;">at risk</span>
<span style="position:absolute;left:1563.20px;top:1245px;font-size:18.29px;line-height:24px;font-weight:400;color:#697387;letter-spacing:0.333px;white-space:pre;">40%</span>
<span style="position:absolute;left:628.80px;top:1311px;font-size:20.9px;line-height:27px;font-weight:400;color:#111628;letter-spacing:0.817px;white-space:pre;-webkit-text-stroke:0.35px currentColor;">Reduce Decision Latency by 30%</span>
<span style="position:absolute;left:1015.30px;top:1313px;font-size:18.29px;line-height:24px;font-weight:400;color:#06604a;letter-spacing:0.459px;white-space:pre;-webkit-text-stroke:0.35px currentColor;">on track</span>
<span style="position:absolute;left:1563.20px;top:1313px;font-size:18.29px;line-height:24px;font-weight:400;color:#697387;letter-spacing:0.333px;white-space:pre;">80%</span>
<span style="position:absolute;left:628.80px;top:1379px;font-size:20.9px;line-height:27px;font-weight:400;color:#111628;letter-spacing:0.402px;white-space:pre;-webkit-text-stroke:0.35px currentColor;">Have 10k ADU</span>
<span style="position:absolute;left:820.60px;top:1381px;font-size:18.29px;line-height:24px;font-weight:400;color:#06604a;letter-spacing:0.459px;white-space:pre;-webkit-text-stroke:0.35px currentColor;">on track</span>
<span style="position:absolute;left:1563.20px;top:1381px;font-size:18.29px;line-height:24px;font-weight:400;color:#697387;letter-spacing:0.333px;white-space:pre;">60%</span>
<span style="position:absolute;left:461.40px;top:1472px;font-size:16.98px;line-height:22px;font-weight:400;color:#697387;letter-spacing:1.474px;white-space:pre;">LOCK-IN TARGET</span>
<span style="position:absolute;left:462.40px;top:1501px;font-size:20.9px;line-height:27px;font-weight:400;color:#111628;letter-spacing:1.000px;white-space:pre;-webkit-text-stroke:0.35px currentColor;">Automated hiring pipeline with &lt;2 week time-to-offer</span>
<span style="position:absolute;left:1698.50px;top:1089px;font-size:27.69px;line-height:36px;font-weight:400;color:#1f212d;letter-spacing:0.080px;white-space:pre;-webkit-text-stroke:1.05px currentColor;">Recent Decisions</span>
<span style="position:absolute;left:1717.50px;top:1166px;font-size:20.9px;line-height:27px;font-weight:400;color:#1b1f30;letter-spacing:0.995px;white-space:pre;-webkit-text-stroke:0.35px currentColor;">Launch &quot;Enterprise Tier&quot; with custom</span>
<span style="position:absolute;left:1717.90px;top:1191px;font-size:20.9px;line-height:27px;font-weight:400;color:#1b1f30;letter-spacing:1.296px;white-space:pre;-webkit-text-stroke:0.35px currentColor;">pricing</span>
<span style="position:absolute;left:1718.50px;top:1229px;font-size:18.29px;line-height:24px;font-weight:400;color:#697387;letter-spacing:-0.023px;white-space:pre;">Ahmed Ali · Jan 17</span>
<span style="position:absolute;left:1717.50px;top:1306px;font-size:20.9px;line-height:27px;font-weight:400;color:#1b1f30;letter-spacing:0.761px;white-space:pre;-webkit-text-stroke:0.35px currentColor;">Fired VP of engineering</span>
<span style="position:absolute;left:1718.50px;top:1348px;font-size:18.29px;line-height:24px;font-weight:400;color:#697387;letter-spacing:0.099px;white-space:pre;">Ali Khalid · Jan 7</span>
<span style="position:absolute;left:1718.50px;top:1425px;font-size:20.9px;line-height:27px;font-weight:400;color:#1b1f30;letter-spacing:0.904px;white-space:pre;-webkit-text-stroke:0.35px currentColor;">Authorize agency spend up to $20k</span>
<span style="position:absolute;left:1718.70px;top:1450px;font-size:20.9px;line-height:27px;font-weight:400;color:#1b1f30;letter-spacing:0.960px;white-space:pre;-webkit-text-stroke:0.35px currentColor;">for hiring</span>
<span style="position:absolute;left:1718.50px;top:1487px;font-size:18.29px;line-height:24px;font-weight:400;color:#697387;letter-spacing:-0.091px;white-space:pre;">Sarah Chen · Jan 15</span>
<span style="position:absolute;left:2137.20px;top:1171px;font-size:18.29px;line-height:24px;font-weight:400;color:#1b1f30;letter-spacing:0.718px;white-space:pre;-webkit-text-stroke:0.6px currentColor;">Type 2</span>
<span style="position:absolute;left:2141.00px;top:1311px;font-size:18.29px;line-height:24px;font-weight:400;color:#1b1f30;letter-spacing:0.158px;white-space:pre;-webkit-text-stroke:0.6px currentColor;">Type 1</span>
<span style="position:absolute;left:2137.20px;top:1430px;font-size:18.29px;line-height:24px;font-weight:400;color:#1b1f30;letter-spacing:0.718px;white-space:pre;-webkit-text-stroke:0.6px currentColor;">Type 2</span>
</body></html>
